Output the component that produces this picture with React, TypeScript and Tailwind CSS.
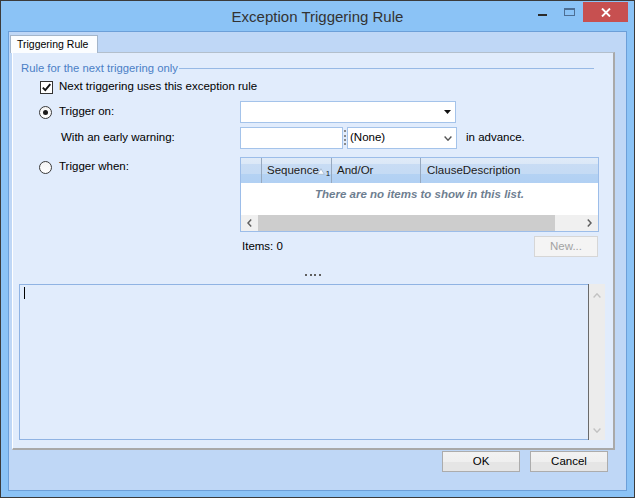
import React from "react";

function Checkbox({ checked }: { checked?: boolean }) {
  return (
    <div className="w-[13px] h-[13px] border border-[#333333] bg-white flex items-center justify-center shrink-0">
      {checked && (
        <svg width="11" height="11" viewBox="0 0 11 11">
          <path d="M1.8 5.6 L4.3 8.2 L9.3 2.2" fill="none" stroke="#111" strokeWidth="1.9" />
        </svg>
      )}
    </div>
  );
}

function Radio({ checked }: { checked?: boolean }) {
  return (
    <div className="w-[13px] h-[13px] rounded-full border border-[#3a3a3a] bg-linear-to-b from-[#f4f4f4] to-white flex items-center justify-center shrink-0">
      {checked && <div className="w-[5px] h-[5px] rounded-full bg-[#1a1a1a]" />}
    </div>
  );
}

function TitleBar() {
  return (
    <div className="h-[30px] grid grid-cols-[1fr_auto_1fr] shrink-0">
      <div />
      <div className="flex items-center text-[15px] text-[#333333] pt-[2px]">Exception Triggering Rule</div>
      <div className="flex justify-end items-start pr-[6px] pt-[1px]">
        <div className="w-[27px] h-[20px] flex justify-center">
          <div className="mt-[12px] w-[9px] h-[2px] bg-[#2b2b2b]" />
        </div>
        <div className="w-[27px] h-[20px] flex items-center justify-center">
          <div className="w-[11px] h-[8px] border border-t-2 border-[#4d6e93]" />
        </div>
        <div className="w-[45px] h-[20px] bg-[#c75050] flex items-center justify-center">
          <svg width="10" height="9" viewBox="0 0 10 9">
            <path d="M1 0.5 L9 8.5 M9 0.5 L1 8.5" stroke="#fff" strokeWidth="1.9" />
          </svg>
        </div>
      </div>
    </div>
  );
}

function ListView() {
  return (
    <div className="w-[359px] h-[75px] border border-[#9cbde9] flex flex-col bg-white">
      <div className="h-[25px] flex text-[11.5px] text-[#1a1a1a] bg-[linear-gradient(to_bottom,#e0ebf8_0%,#dbe8f7_22%,#c8dcf4_24%,#c5dbf4_62%,#b4d2f3_64%,#b1d0f3_100%)]">
        <div className="w-[21px] border-r border-[#97a9bf]" />
        <div className="w-[70px] border-r border-[#97a9bf] flex items-center pl-[5px]">
          Sequence
          <svg width="8" height="7" viewBox="0 0 8 7" className="-ml-[2px] mt-[2px]">
            <path d="M4 0.7 L7.3 6.3 L0.7 6.3 Z" fill="#fbfdff" stroke="#a9bbd0" strokeWidth="0.9" />
          </svg>
          <span className="text-[8px] mt-[6px] ml-[1px]">1</span>
        </div>
        <div className="w-[89px] border-r border-[#97a9bf] flex items-center pl-[5px]">And/Or</div>
        <div className="flex-1 flex items-center pl-[6px]">ClauseDescription</div>
      </div>
      <div className="flex-1 flex justify-center pt-[5px]">
        <span className="text-[11.5px] font-bold italic text-[#6e7e90] leading-[13px]">There are no items to show in this list.</span>
      </div>
      <div className="h-[16px] bg-[#f0f0f0] flex items-center">
        <div className="w-[17px] h-full flex items-center justify-center">
          <svg width="5" height="8" viewBox="0 0 5 8">
            <path d="M4.2 0.6 L1 4 L4.2 7.4" fill="none" stroke="#606060" strokeWidth="1.5" />
          </svg>
        </div>
        <div className="w-[297px] h-full bg-[#cdcdcd]" />
        <div className="flex-1" />
        <div className="w-[17px] h-full flex items-center justify-center">
          <svg width="5" height="8" viewBox="0 0 5 8">
            <path d="M0.8 0.6 L4 4 L0.8 7.4" fill="none" stroke="#606060" strokeWidth="1.5" />
          </svg>
        </div>
      </div>
    </div>
  );
}

function Page() {
  return (
    <div className="ml-[3px] mr-[11px] flex-1 min-h-0 bg-[#e1ecfc] border-t border-l border-r-2 border-b-2 border-t-[#b3bfcc] border-l-white border-r-[#a9a9a9] border-b-[#a9a9a9] flex flex-col pb-[8px] text-[11.5px] text-black">
      {/* group legend */}
      <div className="mt-[8px] h-[14px] flex items-center pl-[8px] pr-[19px]">
        <span className="text-[11.3px] text-[#4b7fc6]">Rule for the next triggering only</span>
        <div className="flex-1 h-px bg-[#97b9e5] ml-[1px]" />
      </div>
      {/* checkbox */}
      <div className="mt-[4px] h-[16px] flex items-center pl-[27px]">
        <Checkbox checked />
        <span className="ml-[6px]">Next triggering uses this exception rule</span>
      </div>
      {/* trigger on */}
      <div className="mt-[6px] grid grid-cols-[227px_1fr]">
        <div className="h-[22px] flex items-center pl-[26px]">
          <Radio checked />
          <span className="ml-[7px]">Trigger on:</span>
        </div>
        <div className="w-[216px] h-[22px] border border-[#a4c3ea] bg-white flex items-center justify-end pr-[4px]">
          <svg width="7" height="4" viewBox="0 0 7 4">
            <path d="M0 0 L7 0 L3.5 4 Z" fill="#111" />
          </svg>
        </div>
      </div>
      {/* early warning */}
      <div className="mt-[4px] grid grid-cols-[227px_1fr]">
        <div className="h-[22px] flex items-center pl-[48px]">With an early warning:</div>
        <div className="flex items-center">
          <div className="w-[103px] h-[22px] border border-[#a4c3ea] bg-white" />
          <div className="w-[4px] h-[22px] flex justify-center pt-[3px]">
            <div className="w-[2px] h-[15px] border-l-2 border-dotted border-[#8a8a8a]" />
          </div>
          <div className="w-[110px] h-[22px] border border-[#a4c3ea] bg-white flex items-center pl-[2px] pr-[4px] justify-between">
            <span>(None)</span>
            <svg width="8" height="5" viewBox="0 0 8 5">
              <path d="M0.6 0.6 L4 4.2 L7.4 0.6" fill="none" stroke="#555" strokeWidth="1.4" />
            </svg>
          </div>
          <span className="ml-[9px]">in advance.</span>
        </div>
      </div>
      {/* trigger when */}
      <div className="mt-[8px] grid grid-cols-[227px_1fr]">
        <div className="h-[16px] mt-[2px] flex items-center pl-[26px]">
          <Radio />
          <span className="ml-[7px]">Trigger when:</span>
        </div>
        <div className="w-[359px] flex flex-col">
          <ListView />
          <div className="mt-[4px] h-[21px] flex items-center justify-between">
            <span className="pl-[2px]">Items: 0</span>
            <div className="w-[64px] h-[21px] mr-[1px] border border-[#d6d6d6] bg-[#f4f4f4] text-[#a3a3a3] flex items-center justify-center">New...</div>
          </div>
        </div>
      </div>
      {/* splitter dots */}
      <div className="mt-[17px] h-[2px] flex justify-center gap-[2.5px]">
        <div className="w-[2px] h-[2px] bg-[#5f5f5f]" />
        <div className="w-[2px] h-[2px] bg-[#5f5f5f]" />
        <div className="w-[2px] h-[2px] bg-[#5f5f5f]" />
        <div className="w-[2px] h-[2px] bg-[#5f5f5f]" />
      </div>
      {/* text area */}
      <div className="mt-[8px] flex-1 min-h-0 ml-[6px] mr-[8px] flex">
        <div className="flex-1 border-l border-t border-b border-[#8fb3e3] bg-[#e1ecfc] pl-[4px] pt-[2px]">
          <div className="w-px h-[12px] bg-black" />
        </div>
        <div className="w-px bg-[#6a6a6a]" />
        <div className="w-[16px] bg-[#ececec] flex flex-col items-center justify-between pt-[9px] pb-[7px]">
          <svg width="8" height="5" viewBox="0 0 8 5">
            <path d="M0.6 4.4 L4 0.8 L7.4 4.4" fill="none" stroke="#c2c2c2" strokeWidth="1.4" />
          </svg>
          <svg width="8" height="5" viewBox="0 0 8 5">
            <path d="M0.6 0.6 L4 4.2 L7.4 0.6" fill="none" stroke="#c2c2c2" strokeWidth="1.4" />
          </svg>
        </div>
      </div>
    </div>
  );
}

function Button({ label }: { label: string }) {
  return (
    <div className="w-[78px] h-[21px] border border-[#acacac] bg-[linear-gradient(to_bottom,#f2f2f2_0%,#efefef_50%,#e5e5e5_51%,#e5e5e5_100%)] flex items-center justify-center text-[11.5px] text-black">
      {label}
    </div>
  );
}

export default function App() {
  return (
    <div className="w-[635px] h-[498px] bg-[#8bc3f6] border border-[#3b3b3b] flex flex-col font-['Liberation_Sans',Arial,sans-serif] text-black select-none overflow-hidden">
      <TitleBar />
      <div className="mx-[7px] mb-[6px] flex-1 min-h-0 border border-[#6c9fd8] bg-[#bfd7f6] flex flex-col">
        <div className="h-[20px] shrink-0 flex items-end pl-[1px] relative z-10">
          <div className="h-[18px] -mb-px w-[88px] border border-b-0 border-[#a3b5ca] bg-[#fbfdff] text-[10.5px] text-black flex items-center pl-[6px]">
            Triggering Rule
          </div>
        </div>
        <Page />
        <div className="h-[40px] shrink-0 flex justify-end gap-[10px] pr-[18px] pt-[1px]">
          <Button label="OK" />
          <Button label="Cancel" />
        </div>
      </div>
    </div>
  );
}
